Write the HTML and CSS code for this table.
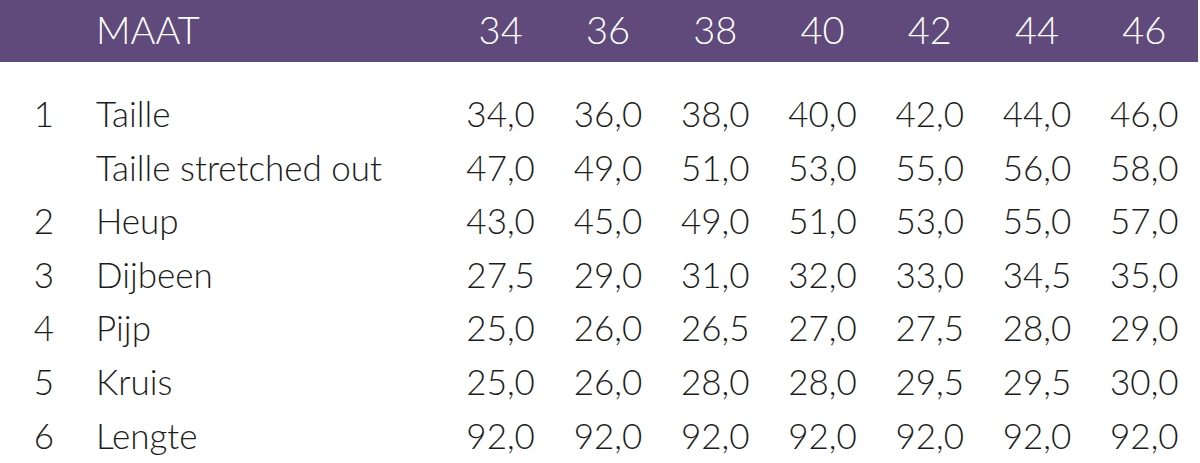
FILE: index.html
```html
<!DOCTYPE html>
<html lang="nl">
<head>
<meta charset="utf-8">
<title>Maattabel</title>
<link rel="stylesheet" href="styles.css">
</head>
<body>
<div class="chart">
  <div class="row head">
    <div class="num"></div>
    <div class="label">MAAT</div>
    <div class="val">34</div><div class="val">36</div><div class="val">38</div><div class="val">40</div><div class="val">42</div><div class="val">44</div><div class="val">46</div>
  </div>
  <div class="rows">
    <div class="row line">
      <div class="num">1</div><div class="label">Taille</div>
      <div class="val">34,0</div><div class="val">36,0</div><div class="val">38,0</div><div class="val">40,0</div><div class="val">42,0</div><div class="val">44,0</div><div class="val">46,0</div>
    </div>
    <div class="row line">
      <div class="num"></div><div class="label">Taille stretched out</div>
      <div class="val">47,0</div><div class="val">49,0</div><div class="val">51,0</div><div class="val">53,0</div><div class="val">55,0</div><div class="val">56,0</div><div class="val">58,0</div>
    </div>
    <div class="row line">
      <div class="num">2</div><div class="label">Heup</div>
      <div class="val">43,0</div><div class="val">45,0</div><div class="val">49,0</div><div class="val">51,0</div><div class="val">53,0</div><div class="val">55,0</div><div class="val">57,0</div>
    </div>
    <div class="row line">
      <div class="num">3</div><div class="label">Dijbeen</div>
      <div class="val">27,5</div><div class="val">29,0</div><div class="val">31,0</div><div class="val">32,0</div><div class="val">33,0</div><div class="val">34,5</div><div class="val">35,0</div>
    </div>
    <div class="row line">
      <div class="num">4</div><div class="label">Pijp</div>
      <div class="val">25,0</div><div class="val">26,0</div><div class="val">26,5</div><div class="val">27,0</div><div class="val">27,5</div><div class="val">28,0</div><div class="val">29,0</div>
    </div>
    <div class="row line">
      <div class="num">5</div><div class="label">Kruis</div>
      <div class="val">25,0</div><div class="val">26,0</div><div class="val">28,0</div><div class="val">28,0</div><div class="val">29,5</div><div class="val">29,5</div><div class="val">30,0</div>
    </div>
    <div class="row line">
      <div class="num">6</div><div class="label">Lengte</div>
      <div class="val">92,0</div><div class="val">92,0</div><div class="val">92,0</div><div class="val">92,0</div><div class="val">92,0</div><div class="val">92,0</div><div class="val">92,0</div>
    </div>
  </div>
</div>
</body>
</html>
```

FILE: styles.css
```css
html, body {
  margin: 0;
  padding: 0;
  background: #ffffff;
}

body {
  font-family: Lato, "Open Sans", sans-serif;
  font-weight: 300;
  color: #1c1c1c;
}

.chart {
  width: 1198px;
}

.row {
  display: grid;
  grid-template-columns: 88px 359px repeat(7, 1fr);
  white-space: nowrap;
}

.head {
  height: 62px;
  line-height: 59px;
  background: #604a7b;
  color: #ffffff;
  font-size: 38px;
}

.rows {
  padding-top: 25px;
}

.line {
  height: 53.6px;
  line-height: 53.6px;
  font-size: 35px;
}

.num {
  text-align: center;
}

.label {
  padding-left: 8px;
}

.val {
  text-align: center;
}
```
